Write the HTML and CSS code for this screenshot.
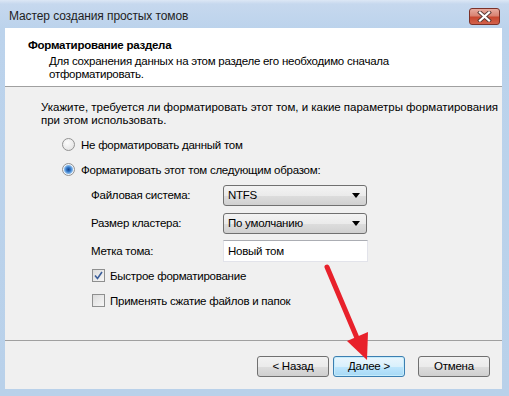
FILE: index.html
```html
<!DOCTYPE html>
<html lang="ru">
<head>
    <meta charset="UTF-8">
    <title>Мастер создания простых томов</title>
    <link rel="stylesheet" href="styles.css">
</head>
<body>
    <div class="window">
        <div class="titlebar">
            <span class="title">Мастер создания простых томов</span>
            <span class="close-btn">
                <svg width="15" height="11" viewBox="0 0 15 11">
                    <path d="M3 1.5 L12 9.5 M12 1.5 L3 9.5" stroke="#5a3a36" stroke-width="4" stroke-linecap="square"/>
                    <path d="M3 1.5 L12 9.5 M12 1.5 L3 9.5" stroke="#ffffff" stroke-width="2.2" stroke-linecap="square"/>
                </svg>
            </span>
        </div>

        <div class="client">
            <div class="header">
                <div class="header-title">Форматирование раздела</div>
                <div class="header-text">Для сохранения данных на этом разделе его необходимо сначала<br>отформатировать.</div>
            </div>

            <div class="main">
                <p class="intro">Укажите, требуется ли форматировать этот том, и какие параметры форматирования<br>при этом использовать.</p>

                <div class="option">
                    <span class="radio"></span>
                    <span>Не форматировать данный том</span>
                </div>
                <div class="option">
                    <span class="radio checked"></span>
                    <span>Форматировать этот том следующим образом:</span>
                </div>

                <div class="fields">
                    <div class="field">
                        <span class="field-label">Файловая система:</span>
                        <span class="combo">NTFS<span class="combo-arrow"></span></span>
                    </div>
                    <div class="field">
                        <span class="field-label">Размер кластера:</span>
                        <span class="combo">По умолчанию<span class="combo-arrow"></span></span>
                    </div>
                    <div class="field">
                        <span class="field-label">Метка тома:</span>
                        <span class="textbox">Новый том</span>
                    </div>
                </div>

                <div class="checks">
                    <div class="check-row">
                        <span class="checkbox checked">
                            <svg width="9" height="9" viewBox="0 0 9 9">
                                <path d="M1 4.5 L3.5 7.5 L8 1" fill="none" stroke="#3b5e9a" stroke-width="1.6"/>
                            </svg>
                        </span>
                        <span>Быстрое форматирование</span>
                    </div>
                    <div class="check-row">
                        <span class="checkbox"></span>
                        <span>Применять сжатие файлов и папок</span>
                    </div>
                </div>
            </div>

            <div class="footer">
                <span class="btn">&lt; Назад</span>
                <span class="btn default">Далее &gt;</span>
                <span class="btn cancel">Отмена</span>
            </div>
        </div>

        <svg class="arrow" width="509" height="396" viewBox="0 0 509 396">
            <line x1="327" y1="267" x2="357" y2="338" stroke="#e8212b" stroke-width="5" stroke-linecap="round"/>
            <polygon points="367,360 347,341 368,332" fill="#e8212b"/>
        </svg>
    </div>
</body>
</html>
```

FILE: styles.css
```css
body {
    margin: 0;
    font-family: "Liberation Sans", Arial, sans-serif;
    font-size: 11.5px;
    letter-spacing: -0.25px;
    color: #000;
}
.window {
    position: relative;
    width: 509px;
    height: 396px;
    background: linear-gradient(to bottom, #dce7f5 0, #c6d8ee 4px, #bcd3ec 28px, #b9d1ea 100%);
    overflow: hidden;
}
.titlebar {
    height: 28px;
    display: flex;
    align-items: center;
    justify-content: space-between;
    padding: 0 9px 0 9px;
    box-sizing: border-box;
}
.title {
    color: #1e1e1e;
    font-size: 12px;
    letter-spacing: -0.1px;
    padding-top: 3px;
}
.close-btn {
    width: 31px;
    height: 17px;
    margin-top: 5px;
    box-sizing: border-box;
    border: 1px solid #7c3128;
    border-radius: 3px;
    background: linear-gradient(to bottom, #e7ab9f 0%, #d98372 45%, #c8472f 55%, #d2624c 100%);
    display: flex;
    align-items: center;
    justify-content: center;
}
.client {
    margin-left: 5px;
    width: 497px;
    height: 361px;
    background: #f0f0f0;
    display: flex;
    flex-direction: column;
}
.header {
    height: 59px;
    background: #fff;
    border-bottom: 1px solid #a0a0a0;
    padding: 10px 0 0 23px;
    box-sizing: border-box;
    flex: none;
}
.header-title {
    font-weight: bold;
    line-height: 14px;
}
.header-text {
    margin: 3px 0 0 21px;
    line-height: 13px;
}
.main {
    height: 254px;
    border-bottom: 1px solid #a0a0a0;
    padding: 14px 0 0 36px;
    box-sizing: border-box;
    flex: none;
    white-space: nowrap;
}
.intro {
    margin: 0;
    line-height: 13px;
    letter-spacing: -0.02px;
}
.option {
    display: flex;
    align-items: center;
    gap: 6px;
    margin-left: 21px;
    height: 25px;
}
.option:first-of-type {
    margin-top: 5px;
}
.radio {
    width: 11px;
    height: 11px;
    border: 1px solid #929292;
    border-radius: 50%;
    background: radial-gradient(circle at 40% 35%, #fcfcfc, #dedede);
}
.radio.checked {
    background: radial-gradient(circle at 50% 50%, #16458a 0, #2f72c3 2px, #7fb4e8 4px, #eef4fb 5px, #e2e2e2 100%);
}
.fields {
    margin-left: 50px;
    margin-top: -1px;
}
.field {
    display: flex;
    align-items: center;
    height: 28px;
}
.field-label {
    width: 132px;
}
.combo {
    position: relative;
    width: 144px;
    height: 21px;
    box-sizing: border-box;
    border: 1px solid #707070;
    border-radius: 3px;
    background: linear-gradient(to bottom, #f3f3f3 0%, #ebebeb 50%, #dddddd 51%, #d0d0d0 100%);
    padding-left: 4px;
    line-height: 19px;
}
.combo-arrow {
    position: absolute;
    right: 6px;
    top: 7px;
    border-left: 4px solid transparent;
    border-right: 4px solid transparent;
    border-top: 5px solid #000;
}
.textbox {
    width: 145px;
    height: 22px;
    box-sizing: border-box;
    border: 1px solid #e2e3ea;
    border-top-color: #abadb3;
    background: #fff;
    padding-left: 4px;
    line-height: 20px;
}
.checks {
    margin-left: 51px;
    margin-top: -2px;
}
.check-row {
    display: flex;
    align-items: center;
    gap: 5px;
    height: 25px;
}
.checkbox {
    width: 11px;
    height: 11px;
    border: 1px solid #8e8f8f;
    background: linear-gradient(135deg, #dcdcdc, #f6f6f6);
    display: flex;
    align-items: center;
    justify-content: center;
}
.footer {
    flex: 1;
    display: flex;
    justify-content: flex-end;
    align-items: flex-start;
    padding: 15px 12px 0 0;
}
.btn {
    width: 72px;
    height: 21px;
    box-sizing: border-box;
    border: 1px solid #707070;
    border-radius: 3px;
    background: linear-gradient(to bottom, #f2f2f2 0%, #ebebeb 50%, #dddddd 51%, #cfcfcf 100%);
    text-align: center;
    line-height: 19px;
    margin-left: 4px;
}
.btn.default {
    border-color: #3c7fb1;
    background: linear-gradient(to bottom, #eaf6fd 0%, #d9f0fc 50%, #bee6fd 51%, #a7d9f5 100%);
    box-shadow: inset 0 0 0 1px #c6ecfb;
}
.btn.cancel {
    margin-left: 13px;
}
.arrow {
    position: absolute;
    left: 0;
    top: 0;
}
```
